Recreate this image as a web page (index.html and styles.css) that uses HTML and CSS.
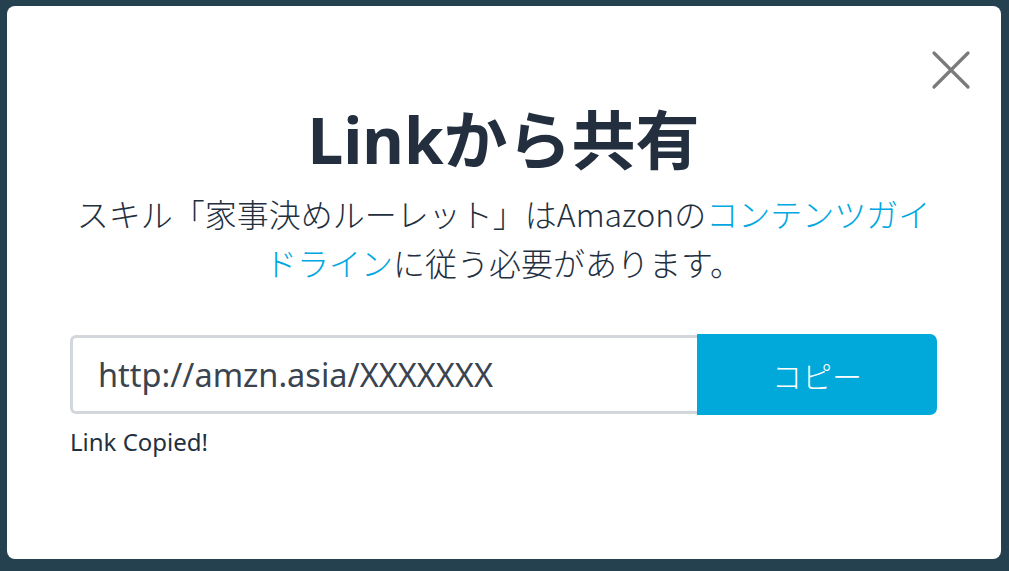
FILE: index.html
```html
<!DOCTYPE html>
<html lang="ja">
<head>
<meta charset="utf-8">
<title>Linkから共有</title>
<link rel="stylesheet" href="styles.css">
</head>
<body>
<div class="backdrop">
  <div class="modal">
    <button class="close" aria-label="閉じる">
      <svg width="40" height="40" viewBox="0 0 40 40"><path d="M3 3 L37 37 M37 3 L3 37" stroke="#7a7a7a" stroke-width="3.2" stroke-linecap="round" fill="none"/></svg>
    </button>
    <h1 class="title">Linkから共有</h1>
    <p class="desc"><span class="line">スキル「家事決めルーレット」はAmazonの<a href="#" class="link">コンテンツガイ</a></span><span class="line"><a href="#" class="link">ドライン</a>に従う必要があります。</span></p>
    <div class="share-row">
      <div class="url-box">http://amzn.asia/XXXXXXX</div>
      <button class="copy-btn">コピー</button>
    </div>
    <div class="copied">Link Copied!</div>
  </div>
</div>
</body>
</html>
```

FILE: styles.css
```css
html, body {
  margin: 0;
  padding: 0;
  width: 1009px;
  height: 571px;
  overflow: hidden;
}
body {
  font-family: "Noto Sans", "Noto Sans CJK JP", sans-serif;
  color: #232f3e;
}
.backdrop {
  width: 1009px;
  height: 571px;
  background: #25404f;
  padding: 6px 8px 0 7px;
  box-sizing: border-box;
}
.modal {
  position: relative;
  width: 994px;
  height: 553px;
  background: #fff;
  border-radius: 8px;
  box-sizing: border-box;
  padding: 98px 64px 0 63px;
}
.close {
  position: absolute;
  top: 44px;
  right: 30px;
  width: 40px;
  height: 40px;
  padding: 0;
  border: 0;
  background: transparent;
  cursor: pointer;
}
.close svg { display: block; }
.title {
  margin: 0;
  text-align: center;
  font-size: 64px;
  line-height: 72px;
  font-weight: 700;
  color: #232f3e;
  font-family: "Noto Sans", "Noto Sans CJK JP", sans-serif;
}
.desc {
  margin: 13px 0 0;
  display: flex;
  flex-direction: column;
  align-items: center;
  font-size: 32px;
  font-weight: 300;
  color: #232f3e;
  font-family: "Noto Sans CJK JP", sans-serif;
}
.desc .line {
  display: block;
  height: 49px;
  line-height: 49px;
  white-space: nowrap;
}
.link {
  color: #00a8e1;
  text-decoration: none;
}
.share-row {
  display: flex;
  margin-top: 47px;
  height: 81px;
}
.url-box {
  flex: 1;
  border: 3px solid #d3d7dc;
  border-right: 0;
  border-radius: 6px 0 0 6px;
  margin: 1px 0;
  padding-left: 25px;
  display: flex;
  align-items: center;
  font-size: 32.5px;
  color: #3a4450;
  font-family: "Noto Sans", sans-serif;
}
.copy-btn {
  width: 240px;
  border: 0;
  background: #00a9d9;
  color: #fff;
  border-radius: 0 7px 7px 0;
  font-size: 30px;
  font-weight: 300;
  font-family: "Noto Sans CJK JP", sans-serif;
  padding: 0;
  cursor: pointer;
}
.copied {
  margin-top: 12px;
  font-size: 24px;
  line-height: 30px;
  color: #232f3e;
  font-family: "Noto Sans", sans-serif;
}
```
